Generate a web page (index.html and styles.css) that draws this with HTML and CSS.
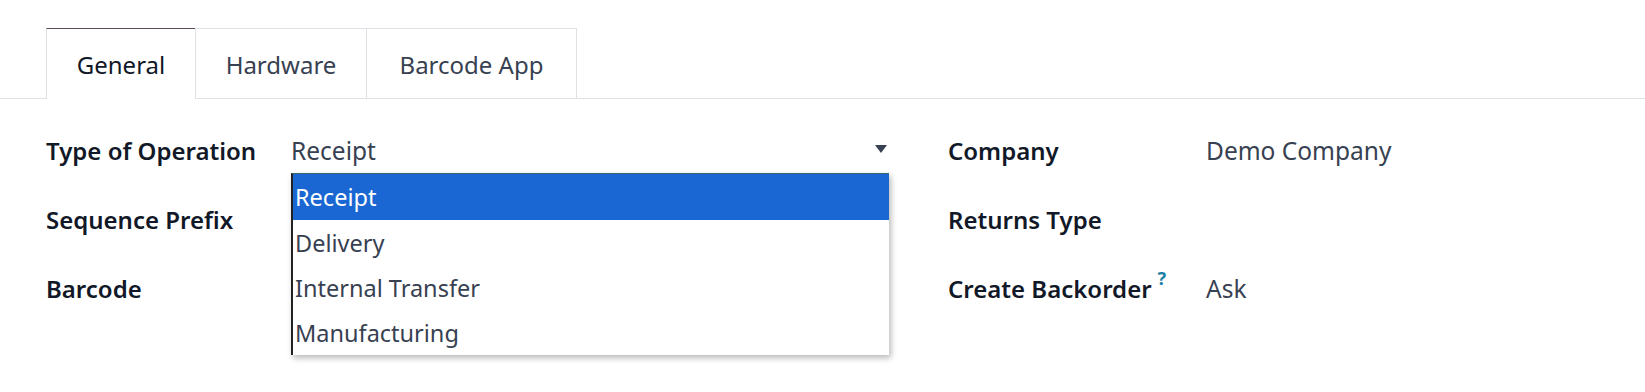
FILE: index.html
```html
<!DOCTYPE html>
<html>
<head>
<meta charset="utf-8">
<link rel="stylesheet" href="styles.css">
</head>
<body>
<div class="tabs">
  <div class="tab active">General</div>
  <div class="tab t2">Hardware</div>
  <div class="tab t3">Barcode App</div>
</div>
<div class="form">
  <div class="group left">
    <div class="row">
      <div class="label">Type of Operation</div>
      <div class="value select">Receipt<span class="caret"></span></div>
    </div>
    <div class="row"><div class="label">Sequence Prefix</div><div class="value"></div></div>
    <div class="row"><div class="label">Barcode</div><div class="value"></div></div>
    <div class="dropdown">
      <div class="opt sel">Receipt</div>
      <div class="opt">Delivery</div>
      <div class="opt">Internal Transfer</div>
      <div class="opt">Manufacturing</div>
    </div>
  </div>
  <div class="group right">
    <div class="row"><div class="label">Company</div><div class="value">Demo Company</div></div>
    <div class="row"><div class="label">Returns Type</div><div class="value"></div></div>
    <div class="row"><div class="label">Create Backorder<sup class="help">?</sup></div><div class="value">Ask</div></div>
  </div>
</div>
</body>
</html>
```
FILE: styles.css
```css
html, body { margin: 0; padding: 0; background: #fff; }
body { font-family: "Noto Sans", "Open Sans", sans-serif; color: #374151; width: 1645px; height: 392px; overflow: hidden; }
.tabs { display: flex; padding: 28px 0 0 46px; border-bottom: 1px solid #dee2e6; height: 70px; }
.tab { box-sizing: border-box; height: 71px; border: 1px solid #dee2e6; border-bottom: none; display: flex; align-items: center; justify-content: center; font-size: 24px; color: #374151; margin-left: -1px; }
.tab.active { width: 150px; margin-left: 0; border-top-color: #5e4a59; color: #111827; background: #fff; height: 71px; margin-bottom: -1px; }
.tab.t2 { width: 172px; }
.tab.t3 { width: 211px; }
.form { display: flex; padding-top: 17px; padding-left: 46px; }
.group { position: relative; display: flex; flex-direction: column; }
.group.left { width: 843px; }
.group.right { margin-left: 59px; }
.row { display: flex; align-items: center; height: 69px; }
.label { font-weight: 600; font-size: 24px; color: #111827; }
.left .label { width: 245px; }
.right .label { width: 258px; }
.value { font-size: 24.5px; color: #374151; }
.select { position: relative; width: 598px; }
.caret { position: absolute; right: 2px; top: 50%; margin-top: -6px; width: 0; height: 0; border-left: 6px solid transparent; border-right: 6px solid transparent; border-top: 8px solid #374151; }
.help { color: #1c7fa6; font-size: 18px; font-weight: 700; vertical-align: top; position: relative; top: -3px; margin-left: 6px; line-height: 1; }
.dropdown { position: absolute; left: 245px; top: 57px; width: 598px; box-sizing: border-box; background: #fff; border-left: 2px solid #222; border-top: 1px solid #3a6a66; box-shadow: 2px 3px 6px rgba(0,0,0,0.28); }
.opt { height: 45px; display: flex; align-items: center; font-size: 23.5px; color: #374151; padding-left: 2px; }
.opt.sel { background: #1a67d3; color: #fff; height: 46px; }
```
